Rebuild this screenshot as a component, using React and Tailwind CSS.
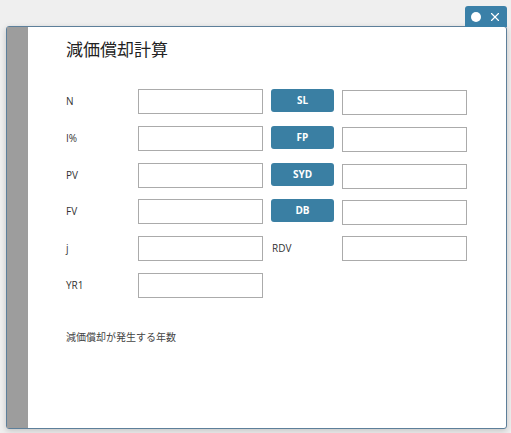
import { X } from 'lucide-react'

const rows = [
    { label: 'N', btn: 'SL' },
    { label: 'I%', btn: 'FP' },
    { label: 'PV', btn: 'SYD' },
    { label: 'FV', btn: 'DB' },
    { label: 'j', side: 'RDV' },
    { label: 'YR1' },
]

function Field() {
    return <input type="text" className="w-[125px] h-[25px] border border-[#ababab] bg-white outline-none px-1 text-[11px]" />
}

export default function App() {
    return (
        <div className="w-[511px] h-[433px] bg-[#efefef] pt-[26px] pl-[6px] overflow-hidden" style={{ fontFamily: '"Open Sans", "Noto Sans CJK JP", sans-serif' }}>
            <div className="relative w-[501px] h-[403px] border border-[#5d7f9a] rounded-[3px] shadow-[0_2px_6px_rgba(0,0,0,0.18)] flex bg-white">
                {/* window tab */}
                <div className="absolute -top-[21px] -right-px w-[42px] h-[21px] bg-[#3a80a8] rounded-t-[3px] flex items-center justify-between pl-[6px] pr-[5px]">
                    <span className="w-[10px] h-[10px] rounded-full bg-white" />
                    <X size={14} strokeWidth={2} className="text-white" />
                </div>

                <div className="w-[21px] bg-[#9d9d9d]" />

                <div className="flex-1 pl-[38px] pt-[11px]">
                    <h1 className="text-[17px] leading-[24px] text-[#222]">減価償却計算</h1>

                    <div className="mt-[27px] flex flex-col gap-[11.8px]">
                        {rows.map((r) => (
                            <div key={r.label} className="flex items-start h-[25px]">
                                <span className="w-[72px] text-[10px] leading-[25px] text-[#333]">{r.label}</span>
                                <Field />
                                {r.btn && (
                                    <>
                                        <button className="ml-[8px] w-[63px] h-[23px] rounded-[3px] bg-[#3a7fa3] text-white text-[10px] font-bold">
                                            {r.btn}
                                        </button>
                                        <div className="ml-[8px]"><Field /></div>
                                    </>
                                )}
                                {r.side && (
                                    <>
                                        <span className="ml-[9px] w-[70px] text-[10px] leading-[25px] text-[#333]">{r.side}</span>
                                        <Field />
                                    </>
                                )}
                            </div>
                        ))}
                    </div>

                    <p className="mt-[32px] text-[10px] text-[#444]">減価償却が発生する年数</p>
                </div>
            </div>
        </div>
    )
}
